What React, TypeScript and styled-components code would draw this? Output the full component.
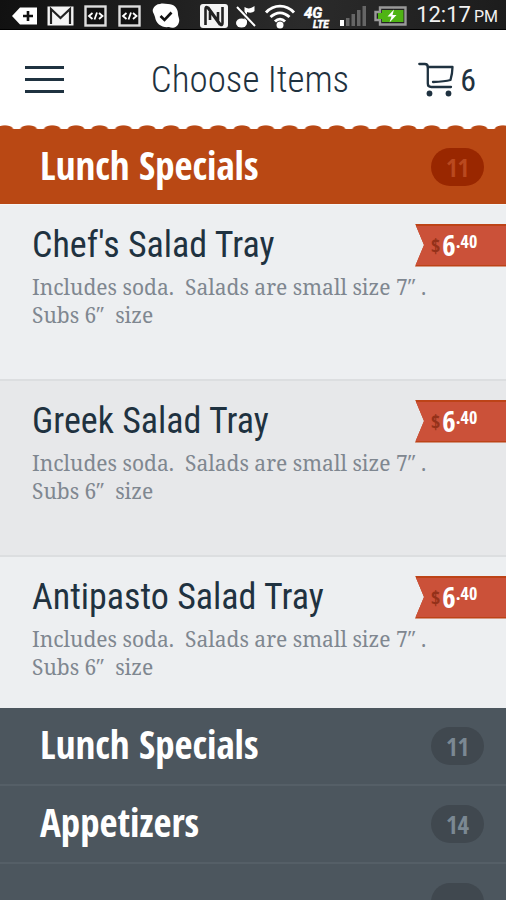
import React from 'react';
import styled, { createGlobalStyle } from 'styled-components';

const ink = '#1f3240';
const condensed = '"Roboto Condensed", "Liberation Sans Narrow", Roboto, sans-serif';
const condensedBold = '"Open Sans Condensed", "Roboto Condensed", "Open Sans", sans-serif';

const GlobalStyle = createGlobalStyle`
  *, *::before, *::after { box-sizing: border-box; }
  html, body, #root { height: 100%; }
  body { margin: 0; background: #4c565e; }
`;

const Screen = styled.div`
  height: 100%;
  display: flex;
  flex-direction: column;
  overflow: hidden;
`;

const StatusBar = styled.div`
  flex: none;
  display: flex;
  align-items: center;
  justify-content: space-between;
  height: 30px;
  padding: 2px 8px 0 11px;
  background: linear-gradient(100deg, #111 0%, #2b2b2b 60%, #1c1c1c 100%);
  border-bottom: 1px solid #000;
  svg { display: block; flex: none; }
`;

const IconGroup = styled.div<{ $gap: number }>`
  display: flex;
  align-items: center;
  gap: ${p => p.$gap}px;
`;

const Clock = styled.span`
  font: 400 22px/28px Roboto, sans-serif;
  color: #f2f2f2;
  white-space: nowrap;
  margin-left: 2px;
  small { font-size: 16px; margin-left: 3px; }
`;

const Header = styled.header`
  flex: none;
  display: grid;
  grid-template-columns: 72px 1fr 72px;
  align-items: center;
  height: 95px;
  padding: 4px 30px 0 24px;
  background: #fff;
  color: ${ink};
`;

const Title = styled.h1`
  margin: 0;
  font: 300 37px/48px ${condensed};
  text-align: center;
  white-space: nowrap;
`;

const IconButton = styled.button`
  display: flex;
  align-items: center;
  gap: 6px;
  height: 40px;
  padding: 0;
  border: 0;
  background: none;
  color: inherit;
  font: 400 32px/40px ${condensed};
  cursor: pointer;
  svg { display: block; flex: none; }
`;

const CartButton = styled(IconButton)`
  justify-self: end;
`;

const Scallops = styled.div`
  flex: none;
  height: 4px;
  background:
    radial-gradient(ellipse 9px 4px at 50% 100%, #b94814 80%, transparent 100%) -7px 0 / 4.69% 100% repeat-x #fff;
`;

const SectionRow = styled.button<{ $active?: boolean }>`
  flex: none;
  display: flex;
  align-items: center;
  justify-content: space-between;
  width: 100%;
  height: ${p => (p.$active ? 75 : 78)}px;
  padding: 0 22px 0 40px;
  text-align: left;
  background: ${p => (p.$active ? '#b94814' : '#4c565e')};
  border: 0;
  border-bottom: ${p => (p.$active ? '0' : '2px solid #555f67')};
  cursor: pointer;
`;

const SectionName = styled.span`
  font: 700 39px/48px ${condensedBold};
  color: #fff;
  padding-bottom: 4px;
`;

const Count = styled.span<{ $active?: boolean }>`
  min-width: 53px;
  height: 38px;
  border-radius: 19px;
  text-align: center;
  font: 700 25px/38px ${condensedBold};
  background: ${p => (p.$active ? '#992700' : '#40484f')};
  color: ${p => (p.$active ? '#b9491f' : '#7b8893')};
`;

const ItemList = styled.ul`
  flex: none;
  list-style: none;
  margin: 0;
  padding: 0;
  border-top: 1px solid #f6f6f6;
`;

const Item = styled.li<{ $shaded?: boolean; $last?: boolean }>`
  min-height: ${p => (p.$last ? 151 : 176)}px;
  padding: 18px 0 0 32px;
  background: ${p => (p.$shaded ? '#e7e8ea' : '#edeff1')};
  border-bottom: ${p => (p.$last ? '0' : '2px solid #dcdee0')};
`;

const ItemHead = styled.div`
  display: flex;
  align-items: center;
  justify-content: space-between;
  height: 44px;
`;

const ItemName = styled.h3`
  margin: 0;
  font: 400 36px/44px ${condensed};
  color: ${ink};
  white-space: nowrap;
`;

const PriceEdge = styled.div`
  flex: none;
  width: 91px;
  height: 43px;
  padding: 2px 0;
  background: #bd4317;
  clip-path: polygon(0 0, 100% 0, 100% 100%, 0 100%, 9px 50%);
`;

const Price = styled.div`
  display: flex;
  align-items: flex-start;
  height: 39px;
  padding-left: 16px;
  background: #cb5139;
  color: #fff;
  font: 700 29px/38px ${condensedBold};
`;

const Currency = styled.span`
  font-size: 20px;
  line-height: 40px;
  color: #943119;
  margin-right: 2px;
`;

const Cents = styled.span`
  font-size: 18px;
  line-height: 30px;
`;

const Description = styled.p`
  margin: 0;
  padding: 6px 64px 0 0;
  font: 400 21px/28px "Noto Serif", "DejaVu Serif", serif;
  color: #7f8790;
`;

const DevIcon = () => (
  <svg width="24" height="22" viewBox="0 0 24 22">
    <rect x="1.5" y="1.5" width="20" height="19" fill="#111" stroke="#ddd" strokeWidth="2.4" />
    <path d="M8.500 8 5 11l3.500 3M15 8l3.500 3-3.500 3M13 7.500l-2.500 7" fill="none" stroke="#fff" strokeWidth="1.800" />
  </svg>
);

const CartIcon = () => (
  <svg width="36" height="35" viewBox="0 0 36 35" fill="none" stroke={ink} strokeWidth="2.300" strokeLinejoin="round" strokeLinecap="round">
    <path d="M1.300 2h5.500c2 0 3 1 3 3v16.500c0 2.500 1 3.500 3.500 3.500H33" />
    <path d="M9.800 5H34.500c-.1 5-.7 8.500-2 13-5.500 1.400-11 1.700-17.500 2" />
    <circle cx="11.500" cy="31.500" r="2.900" fill={ink} stroke="none" />
    <circle cx="30.500" cy="31.500" r="2.900" fill={ink} stroke="none" />
  </svg>
);

const items = [
  { name: "Chef's Salad Tray", dollars: '6', cents: '.40' },
  { name: 'Greek Salad Tray', dollars: '6', cents: '.40' },
  { name: 'Antipasto Salad Tray', dollars: '6', cents: '.40' },
];

const sections = [
  { name: 'Lunch Specials', count: '11' },
  { name: 'Appetizers', count: '14' },
  { name: '', count: '' },
];

export default function App() {
  return (
    <Screen>
      <GlobalStyle />
      <StatusBar>
        <IconGroup $gap={10}>
          <svg width="26" height="22" viewBox="0 0 26 22">
            <path d="M1 11 9 2.500h17v17H9z" fill="#fff" />
            <path d="M17 6v10M12 11h10" stroke="#111" strokeWidth="2.600" />
          </svg>
          <svg width="27" height="22" viewBox="0 0 27 22">
            <rect x=".5" y="1.500" width="26" height="19" fill="#f4f4f4" />
            <path d="M4 19V4l9.500 9L23 4v15" fill="none" stroke="#222" strokeWidth="2.200" />
          </svg>
          <DevIcon />
          <DevIcon />
          <svg width="28" height="26" viewBox="0 0 28 26">
            <path d="M8 1c3-1 5 0 8 0 6 0 10 4 10 10 0 3 2 5 1 8-1 5-6 7-10 5-7 1-13-3-14-10C2 10 0 9 1 6c1-3 4-5 7-5z" fill="#fff" />
            <path d="M8.500 13l4 4 7-7.500" fill="none" stroke="#111" strokeWidth="2.600" />
          </svg>
        </IconGroup>
        <IconGroup $gap={7}>
          <svg width="28" height="26" viewBox="0 0 28 26">
            <rect x="0" y="1" width="28" height="24" rx="3" fill="#f4f4f4" />
            <path d="M5.500 22V6c0-2 1-2.500 2-1.500L18 19V9M22.500 4v16c0 2-1 2.500-2 1.500L10 7v10" fill="none" stroke="#222" strokeWidth="2.600" />
          </svg>
          <svg width="22" height="26" viewBox="0 0 22 26">
            <ellipse cx="6.500" cy="20" rx="5.500" ry="4.500" fill="#fff" />
            <path d="M9.500 20V4c3 2 6 2 10-1v5c-2 2-5 2-7.500 1v11z" fill="#fff" />
            <path d="M2 4l18 19" stroke="#222" strokeWidth="4" />
            <path d="M2 4l18 19" stroke="#fff" strokeWidth="2" />
          </svg>
          <svg width="32" height="26" viewBox="0 0 32 26" fill="none" stroke="#fff" strokeWidth="2.900">
            <path d="M2 9.500c8-8.500 20-8.500 28 0M6.500 14c6-5.500 13-5.500 19 0M11 18.500c3-3 7-3 10 0" />
            <circle cx="16" cy="22" r="3.500" fill="#fff" stroke="none" />
          </svg>
          <svg width="30" height="28" viewBox="0 0 30 28" fill="#fff" stroke="#fff" strokeWidth=".5" fontFamily="Roboto, sans-serif" fontWeight="700" fontStyle="italic">
            <text x="1" y="16" fontSize="15">4G</text>
            <text x="10" y="26" fontSize="10">LTE</text>
          </svg>
          <svg width="27" height="22" viewBox="0 0 27 22" fill="#666">
            <rect x="0" y="15" width="4" height="6" fill="#fff" />
            <rect x="6" y="13" width="3.500" height="8" />
            <rect x="11.500" y="9" width="3.500" height="12" />
            <rect x="17" y="5" width="3.500" height="16" />
            <rect x="22.500" y="1" width="3.500" height="20" />
          </svg>
          <svg width="33" height="20" viewBox="0 0 33 20">
            <path d="M6 1.500h25.500v17H6V14H1.500V6H6z" fill="#222" stroke="#999" strokeWidth="2.400" />
            <path d="M8 4h21.500v12H8v-3H4V7h4z" fill="#4fb414" />
            <path d="M20 3.500l-6.500 7h4l-2 6 7-7.500h-4z" fill="#fff" />
          </svg>
          <Clock>12:17<small>PM</small></Clock>
        </IconGroup>
      </StatusBar>

      <Header>
        <IconButton aria-label="Menu">
          <svg width="41" height="28" viewBox="0 0 41 28" fill={ink}>
            <rect x="1" y="0" width="39" height="3" />
            <rect x="1" y="12" width="39" height="3" />
            <rect x="1" y="24" width="39" height="3" />
          </svg>
        </IconButton>
        <Title>Choose Items</Title>
        <CartButton aria-label="Cart, 6 items">
          <CartIcon />
          6
        </CartButton>
      </Header>
      <Scallops />

      <SectionRow $active aria-expanded="true">
        <SectionName>Lunch Specials</SectionName>
        <Count $active>11</Count>
      </SectionRow>
      <ItemList>
        {items.map((item, i) => (
          <Item key={item.name} $shaded={i % 2 === 1} $last={i === items.length - 1}>
            <ItemHead>
              <ItemName>{item.name}</ItemName>
              <PriceEdge>
                <Price>
                  <Currency>$</Currency>
                  {item.dollars}
                  <Cents>{item.cents}</Cents>
                </Price>
              </PriceEdge>
            </ItemHead>
            <Description>{'Includes soda.\u00a0 Salads are small size 7″\u00a0. Subs 6″\u00a0 size'}</Description>
          </Item>
        ))}
      </ItemList>
      {sections.map((section, i) => (
        <SectionRow key={i} aria-expanded="false">
          <SectionName>{section.name}</SectionName>
          <Count>{section.count}</Count>
        </SectionRow>
      ))}
    </Screen>
  );
}
